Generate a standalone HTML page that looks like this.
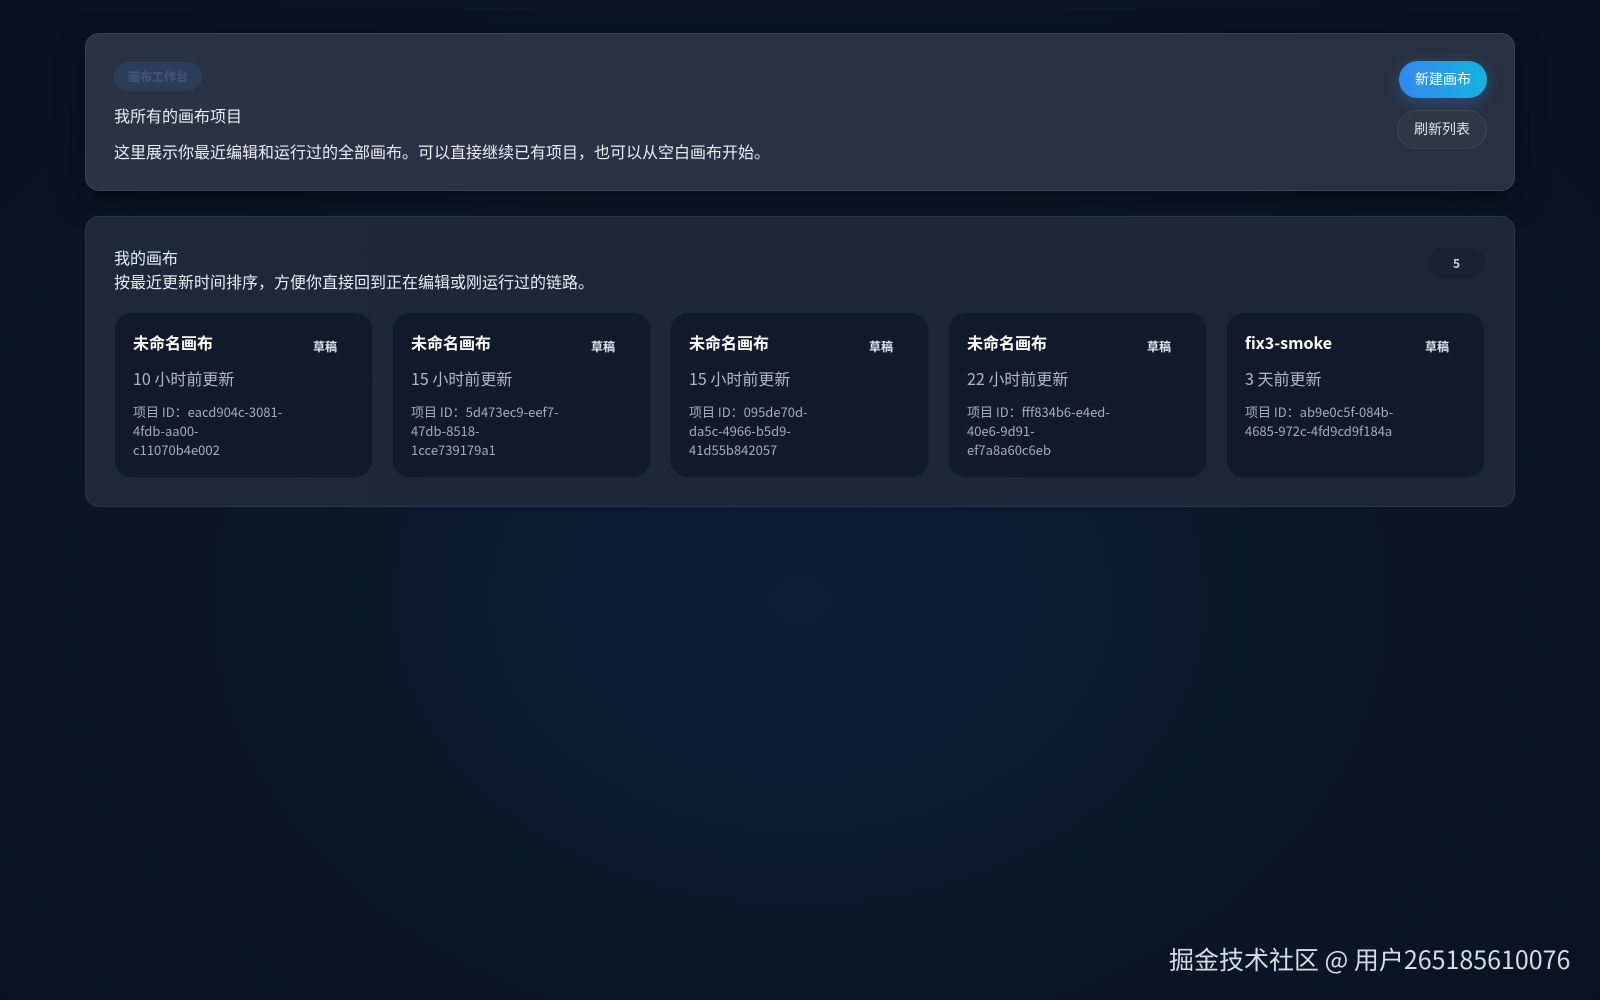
<!DOCTYPE html>
<html><head><meta charset="utf-8"><style>
*{box-sizing:border-box;margin:0;padding:0}
body{width:1600px;height:1000px;overflow:hidden;font-family:"Noto Sans CJK SC","Liberation Sans",sans-serif;background:radial-gradient(ellipse at 50% 60%,#0d1d36 0%,#0a1629 50%,#08111f 100%);color:#e8edf5;position:relative;line-height:1.2}
.top{position:absolute;left:85px;top:33px;width:1430px;height:158px;border-radius:14px;background:linear-gradient(90deg,#2a3344,#283142);border:1px solid #384254;box-shadow:0 10px 30px rgba(0,0,0,.4)}
.tag{position:absolute;left:28px;top:28px;width:88px;height:29px;border-radius:15px;background:#2b3d59;color:#3f5577;font-size:12px;font-weight:900;line-height:29px;text-align:center}
.t1{position:absolute;left:28px;top:72px;font-size:16px}
.t2{position:absolute;left:28px;top:108px;font-size:16px}
.btn1{position:absolute;left:1313px;top:27px;width:88px;height:37px;border-radius:19px;background:linear-gradient(90deg,#3388f0,#14b3e0);color:#fff;font-size:14px;text-align:center;line-height:37px;box-shadow:0 4px 14px rgba(40,140,240,.35)}
.btn2{position:absolute;left:1311px;top:76px;width:90px;height:39px;border-radius:20px;background:#2f3745;border:1px solid #3c4555;color:#dfe4ec;font-size:14px;text-align:center;line-height:37px}
.sec{position:absolute;left:85px;top:216px;width:1430px;height:291px;border-radius:14px;background:linear-gradient(90deg,#1d2839,#1b2637);border:1px solid #2b3647}
.s1{position:absolute;left:28px;top:31px;font-size:16px}
.s2{position:absolute;left:28px;top:55px;font-size:16px}
.cnt{position:absolute;left:1341px;top:31px;width:59px;height:31px;border-radius:16px;background:#172234;color:#c8d0dc;font-size:12px;font-weight:bold;text-align:center;line-height:31px}
.card{position:absolute;top:95px;width:259px;height:166px;border-radius:18px;background:#111a2a;border:1px solid #1a2435}
.card .n{position:absolute;left:18px;top:20px;font-size:16px;font-weight:bold;color:#fff}
.card .d{position:absolute;left:198px;top:27px;font-size:12px;font-weight:bold;color:#dde3ec}
.card .tm{position:absolute;left:18px;top:56px;font-size:16px;color:#aeb7c5}
.card .id{position:absolute;left:18px;top:89px;width:160px;font-size:13px;line-height:19px;color:#a3acba;word-break:break-all}
.wm{position:absolute;left:1169px;top:946px;font-size:25px;color:#d7dce3;line-height:1.1}
</style></head><body>
<div class="top">
<div class="tag">画布工作台</div>
<div class="t1">我所有的画布项目</div>
<div class="t2">这里展示你最近编辑和运行过的全部画布。可以直接继续已有项目，也可以从空白画布开始。</div>
<div class="btn1">新建画布</div>
<div class="btn2">刷新列表</div>
</div>
<div class="sec">
<div class="s1">我的画布</div>
<div class="s2">按最近更新时间排序，方便你直接回到正在编辑或刚运行过的链路。</div>
<div class="cnt">5</div>
<div class="card" style="left:28px"><div class="n">未命名画布</div><div class="d">草稿</div><div class="tm">10 小时前更新</div><div class="id">项目 ID：eacd904c-3081-<br>4fdb-aa00-<br>c11070b4e002</div></div>
<div class="card" style="left:306px"><div class="n">未命名画布</div><div class="d">草稿</div><div class="tm">15 小时前更新</div><div class="id">项目 ID：5d473ec9-eef7-<br>47db-8518-<br>1cce739179a1</div></div>
<div class="card" style="left:584px"><div class="n">未命名画布</div><div class="d">草稿</div><div class="tm">15 小时前更新</div><div class="id">项目 ID：095de70d-<br>da5c-4966-b5d9-<br>41d55b842057</div></div>
<div class="card" style="left:862px"><div class="n">未命名画布</div><div class="d">草稿</div><div class="tm">22 小时前更新</div><div class="id">项目 ID：fff834b6-e4ed-<br>40e6-9d91-<br>ef7a8a60c6eb</div></div>
<div class="card" style="left:1140px"><div class="n">fix3-smoke</div><div class="d">草稿</div><div class="tm">3 天前更新</div><div class="id">项目 ID：ab9e0c5f-084b-<br>4685-972c-4fd9cd9f184a</div></div>
</div>
<div class="wm">掘金技术社区 @ 用户265185610076</div>
</body></html>
